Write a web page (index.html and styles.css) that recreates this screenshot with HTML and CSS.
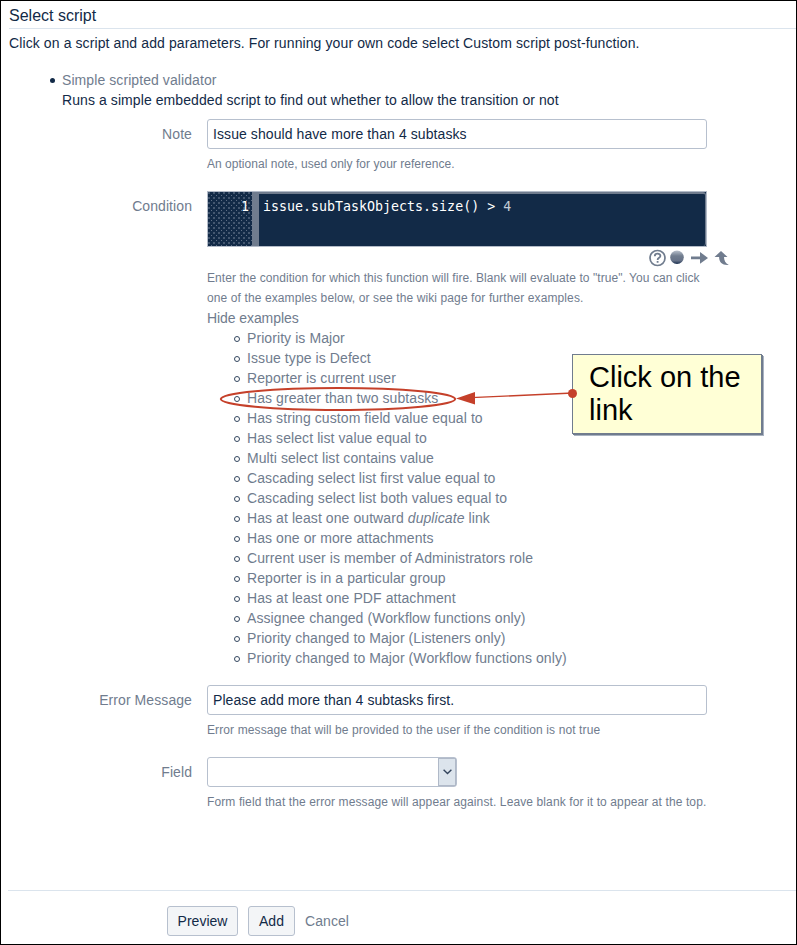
FILE: index.html
```html
<!DOCTYPE html>
<html lang="en">
<head>
<meta charset="utf-8">
<title>Select script</title>
<link rel="stylesheet" href="styles.css">
</head>
<body>
<main class="page">
  <h1 class="title">Select script</h1>
  <p class="intro">Click on a script and add parameters. For running your own code select Custom script post-function.</p>

  <section class="script">
    <a class="script-name">Simple scripted validator</a>
    <p class="script-desc">Runs a simple embedded script to find out whether to allow the transition or not</p>
  </section>

  <form class="form">
    <div class="row row-note">
      <label class="label">Note</label>
      <div class="field">
        <div class="input">Issue should have more than 4 subtasks</div>
        <p class="help help-note">An optional note, used only for your reference.</p>
      </div>
    </div>

    <div class="row row-condition">
      <label class="label">Condition</label>
      <div class="field">
        <div class="editor">
          <div class="gutter">1</div>
          <code class="code">issue.subTaskObjects.size() &gt; <span class="num">4</span></code>
        </div>
        <div class="tools">
          <svg width="80" height="18" viewBox="0 0 80 18">
            <defs>
              <linearGradient id="ball" x1="0" y1="0" x2="0" y2="1">
                <stop offset="0" stop-color="#b8c0cc"/>
                <stop offset=".4" stop-color="#707c8e"/>
                <stop offset=".75" stop-color="#667288"/>
                <stop offset="1" stop-color="#142a4a"/>
              </linearGradient>
            </defs>
            <circle cx="8.5" cy="9" r="7.5" fill="#fff" stroke="#707c8e" stroke-width="1.7"/>
            <path d="M5.8 7.2C5.8 3.9 11.4 3.9 11.4 7C11.4 8.9 8.6 8.8 8.6 11M8.6 12v1.8" fill="none" stroke="#707c8e" stroke-width="1.8"/>
            <circle cx="28" cy="8.3" r="6.8" fill="url(#ball)"/>
            <path d="M42 7.4h9V3l8 5.9-8 5.8v-4.4h-9z" fill="#707c8e"/>
            <path d="M72 2l6.500 6h-3.500c.1 3.800 1.400 6 4.800 7.900-6 .6-9.600-2-9.700-7.900H65.500z" fill="#707c8e"/>
          </svg>
        </div>
        <p class="help help-condition"><span class="line-first">Enter the condition for which this function will fire. Blank will evaluate to "true". You can click</span><br>one of the examples below, or see the wiki page for further examples.</p>
        <a class="toggle">Hide examples</a>
        <ul class="examples">
          <li>Priority is Major</li>
          <li>Issue type is Defect</li>
          <li>Reporter is current user</li>
          <li>Has greater than two subtasks</li>
          <li>Has string custom field value equal to</li>
          <li>Has select list value equal to</li>
          <li>Multi select list contains value</li>
          <li>Cascading select list first value equal to</li>
          <li>Cascading select list both values equal to</li>
          <li>Has at least one outward <em>duplicate</em> link</li>
          <li>Has one or more attachments</li>
          <li>Current user is member of Administrators role</li>
          <li>Reporter is in a particular group</li>
          <li>Has at least one PDF attachment</li>
          <li>Assignee changed (Workflow functions only)</li>
          <li>Priority changed to Major (Listeners only)</li>
          <li>Priority changed to Major (Workflow functions only)</li>
        </ul>
      </div>
    </div>

    <div class="row row-error">
      <label class="label">Error Message</label>
      <div class="field">
        <div class="input">Please add more than 4 subtasks first.</div>
        <p class="help">Error message that will be provided to the user if the condition is not true</p>
      </div>
    </div>

    <div class="row">
      <label class="label">Field</label>
      <div class="field">
        <div class="select">
          <div class="select-btn">
            <svg width="9" height="6" viewBox="0 0 9 6"><path d="M.6.8L4.500 4.500 8.400.8" fill="none" stroke="#33445c" stroke-width="1.400"/></svg>
          </div>
        </div>
        <p class="help">Form field that the error message will appear against. Leave blank for it to appear at the top.</p>
      </div>
    </div>
  </form>

  <footer class="footer">
    <button class="btn btn-preview" type="button">Preview</button>
    <button class="btn btn-add" type="button">Add</button>
    <a class="cancel">Cancel</a>
  </footer>

  <svg class="pointer" width="362" height="30" viewBox="0 0 362 30">
    <ellipse cx="119" cy="16" rx="117.200" ry="11" fill="none" stroke="#c5402a" stroke-width="2"/>
    <path d="M252 14.700L354 10" stroke="#c5402a" stroke-width="1.300"/>
    <path d="M237 15.500L256 9v12.500z" fill="#c5402a"/>
  </svg>
  <aside class="callout">Click on the<br>link<i class="dot"></i></aside>
</main>
</body>
</html>
```
FILE: styles.css
```css
*, *::before { box-sizing: border-box; }
html, body { margin: 0; }
body {
  font: 14px/20px "Liberation Sans", Arial, sans-serif;
  letter-spacing: 0.08px;
  color: #122a47;
  background: #fff;
}
p, ul, h1 { margin: 0; padding: 0; }
.page {
  position: relative;
  width: 797px;
  height: 945px;
  border: 1px solid #000;
  padding-left: 8px;
  overflow: hidden;
}
.title {
  height: 28px;
  padding-top: 5px;
  border-bottom: 1px solid #dbe4ed;
  font-size: 16px;
  font-weight: 400;
  letter-spacing: 0;
}
.intro { padding-top: 4px; letter-spacing: 0.105px; }
.script { padding: 17px 0 0 53px; }
.script-name { position: relative; display: block; color: #707c8e; }
.script-name::before {
  content: "";
  position: absolute;
  left: -12px;
  top: 8px;
  width: 5px;
  height: 5px;
  border-radius: 50%;
  background: #122a47;
}
.form { padding-top: 9px; height: 780px; }
.row { display: grid; grid-template-columns: 183px 500px; column-gap: 15px; }
.row-note { height: 72px; }
.row-condition { height: 494px; }
.row-error { height: 72px; }
.label { padding-top: 5px; text-align: right; color: #707c8e; }
.input {
  height: 30px;
  padding: 4px 5px;
  border: 1px solid #b7c0ce;
  border-radius: 3px;
}
.help {
  margin-top: 5px;
  font-size: 12px;
  letter-spacing: 0.11px;
  color: #707c8e;
  white-space: nowrap;
}
.help-note { letter-spacing: 0.03px; }
.help-condition { margin: 0; }
.line-first { letter-spacing: 0.065px; }
.editor {
  display: flex;
  height: 56px;
  border: 1px solid #b3bbc8;
  background: #122a47;
  font: 13.300px/20px "DejaVu Sans Mono", monospace;
  letter-spacing: 0;
  color: #fff;
}
.gutter {
  width: 51px;
  padding: 5px 3px 0 0;
  border-right: 7px solid #707c8e;
  text-align: right;
  background-image:
    radial-gradient(circle at 1px 1px, #607087 0.600px, transparent 0.900px),
    radial-gradient(circle at 3.500px 3.500px, #607087 0.600px, transparent 0.900px);
  background-size: 5px 5px;
}
.code {
  flex: 1;
  padding: 3px 0 0 4px;
  border-top: 2px solid #707c8e;
  border-right: 1px solid #707c8e;
  border-radius: 0 3px 3px 0;
  font: inherit;
  white-space: pre;
}
.num { color: #c2cad5; }
.tools { height: 21px; padding: 2px 0 0 442px; }
.tools svg { display: block; }
.toggle { display: block; color: #707c8e; letter-spacing: -0.08px; }
.examples { list-style: none; color: #707c8e; padding-left: 40px; }
.examples li { position: relative; white-space: nowrap; }
.examples li::before {
  content: "";
  position: absolute;
  left: -13px;
  top: 8px;
  width: 6px;
  height: 6px;
  border: 1.500px solid #34475f;
  border-radius: 50%;
}
.select {
  display: flex;
  justify-content: flex-end;
  width: 250px;
  height: 30px;
  border: 1px solid #b7c0ce;
  border-radius: 3px;
}
.select-btn {
  display: flex;
  align-items: center;
  justify-content: center;
  width: 18px;
  border: 1px solid #b0b9c8;
  background: #dce4ec;
}
.footer {
  display: flex;
  align-items: flex-start;
  gap: 10px;
  margin-left: -1px;
  padding: 15px 0 0 159px;
  border-top: 1px solid #dbe4ed;
}
.btn {
  height: 30px;
  padding: 0;
  border: 1px solid #b7c0ce;
  border-radius: 3px;
  background: #f3f5f7;
  color: #122a47;
  font: inherit;
}
.btn-preview { width: 71px; }
.btn-add { width: 47px; }
.cancel { padding-top: 5px; color: #707c8e; }
.pointer { position: absolute; left: 218px; top: 382px; }
.callout {
  position: absolute;
  left: 571px;
  top: 353px;
  width: 190px;
  height: 80px;
  padding: 6px 0 0 16px;
  border: 1px solid #707c8e;
  background: #ffffd6;
  box-shadow: 1px 1px 0 #707c8e, 2px 2px 0 #a9b3c1;
  font-size: 29px;
  line-height: 33px;
  letter-spacing: 0;
  color: #000;
  white-space: nowrap;
}
.dot {
  position: absolute;
  left: -5px;
  top: 34px;
  width: 9px;
  height: 9px;
  border-radius: 50%;
  background: #c5402a;
}
```
